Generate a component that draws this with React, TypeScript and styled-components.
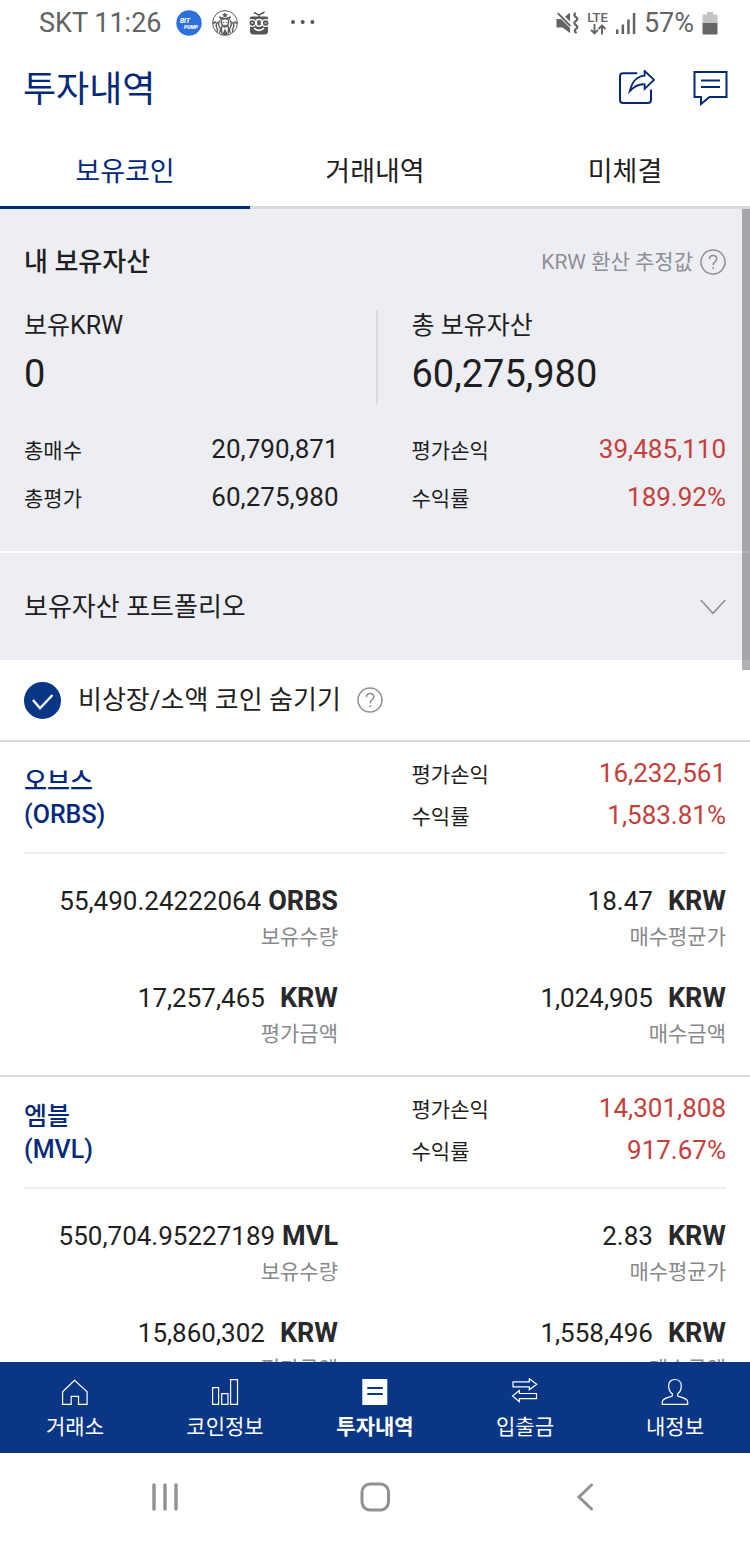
import React, { useState } from "react";
import styled, { createGlobalStyle } from "styled-components";

const navy = "#0a3686";
const deepNavy = "#05297a";
const ink = "#1f1f21";
const red = "#c4403a";
const panel = "#edeef4";

const GlobalStyle = createGlobalStyle`
  *, *::before, *::after { box-sizing: border-box; }
  body {
    margin: 0;
    background: #fff;
    color: ${ink};
    font-family: Roboto, "Noto Sans CJK KR", sans-serif;
  }
  button {
    font: inherit;
    color: inherit;
    background: none;
    border: 0;
    padding: 0;
    cursor: pointer;
  }
  h1, h2, h3, p, dl, dt, dd { margin: 0; font-weight: 400; }
  svg { display: block; flex: none; }
`;

const Screen = styled.div`
  display: flex;
  flex-direction: column;
  height: 100vh;
`;

/* ---------- Status bar ---------- */

const StatusBar = styled.div`
  flex: none;
  display: flex;
  align-items: center;
  justify-content: space-between;
  height: 46px;
  padding: 0 32px 0 39px;
  color: #636363;
  font-size: 27px;
  line-height: 32px;
`;

const StatusGroup = styled.div<{ $gap: number }>`
  display: flex;
  align-items: center;
  gap: ${(p) => p.$gap}px;
`;

const Clock = styled.span`
  margin-right: 4px;
`;

const More = styled.span`
  margin-left: 10px;
`;

const Lte = styled.span`
  display: flex;
  flex-direction: column;
  align-items: center;
  font-size: 13px;
  font-weight: 500;
  line-height: 12px;
`;

/* ---------- Header and tabs ---------- */

const Header = styled.header`
  flex: none;
  display: flex;
  align-items: center;
  justify-content: space-between;
  height: 84px;
  padding: 0 22px 0 23px;
  color: ${deepNavy};
`;

const Title = styled.h1`
  padding-top: 3px;
  font-size: 36px;
  line-height: 48px;
`;

const HeaderActions = styled.div`
  display: flex;
  gap: 38px;
`;

const Tabs = styled.div`
  flex: none;
  display: flex;
`;

const Tab = styled.button<{ $active?: boolean }>`
  flex: 1;
  height: 79px;
  padding-top: 7px;
  border-bottom: 3px solid ${(p) => (p.$active ? deepNavy : "#d9dade")};
  color: ${(p) => (p.$active ? deepNavy : ink)};
  font-size: 27px;
  line-height: 36px;
`;

/* ---------- Scrolling content ---------- */

const Viewport = styled.div`
  position: relative;
  flex: 1;
  min-height: 0;
`;

const Content = styled.main`
  height: 100%;
  overflow-y: auto;
  scrollbar-width: none;
`;

const ScrollThumb = styled.div`
  position: absolute;
  top: 0;
  right: 0;
  width: 8px;
  height: 40%;
  background: rgba(70, 70, 75, 0.42);
`;

const Summary = styled.section`
  padding: 35px 24px 30px;
  background: ${panel};
  border-bottom: 2px solid #fff;
`;

const SummaryHead = styled.div`
  display: flex;
  align-items: center;
  justify-content: space-between;
  margin-bottom: 30px;
`;

const SummaryTitle = styled.h2`
  font-size: 26px;
  font-weight: 500;
  line-height: 36px;
`;

const Hint = styled.button`
  display: flex;
  align-items: center;
  gap: 7px;
  color: #8f9094;
  font-size: 21px;
  line-height: 32px;
`;

const Split = styled.div`
  display: flex;
`;

const Half = styled.div<{ $ruled?: boolean }>`
  flex: 1 1 0;
  min-width: 0;
  &:first-child { padding-right: 37px; }
  &:last-child {
    padding-left: ${(p) => (p.$ruled ? 34 : 36)}px;
    border-left: ${(p) => (p.$ruled ? "2px solid #d9dadf" : "0")};
  }
`;

const Totals = styled(Split)`
  margin-bottom: 21px;
`;

const TotalLabel = styled.p`
  margin-bottom: 8px;
  font-size: 25px;
  line-height: 32px;
`;

const TotalValue = styled.p`
  padding-bottom: 6px;
  font-size: 38px;
  line-height: 48px;
`;

const Stat = styled.div<{ $line: number }>`
  display: flex;
  align-items: baseline;
  justify-content: space-between;
  height: ${(p) => p.$line}px;
  line-height: ${(p) => p.$line}px;
`;

const StatLabel = styled.dt`
  font-size: 21px;
`;

const StatValue = styled.dd<{ $up?: boolean }>`
  font-size: 26px;
  color: ${(p) => (p.$up ? red : ink)};
`;

const Portfolio = styled.button`
  display: flex;
  align-items: center;
  justify-content: space-between;
  width: 100%;
  height: 107px;
  padding: 0 24px;
  background: ${panel};
  font-size: 26px;
  line-height: 36px;
`;

const Filter = styled.div`
  display: flex;
  align-items: center;
  gap: 16px;
  height: 82px;
  padding: 0 24px;
  border-bottom: 2px solid #d9dadc;
  color: #8f9094;
`;

const FilterLabel = styled.label`
  display: flex;
  align-items: center;
  gap: 17px;
  color: ${ink};
  font-size: 26px;
  line-height: 36px;
  cursor: pointer;
`;

const CheckCell = styled.span`
  display: grid;
  width: 37px;
  height: 37px;
  > * { grid-area: 1 / 1; }
`;

const CheckInput = styled.input`
  appearance: none;
  width: 37px;
  height: 37px;
  margin: 0;
  border: 2px solid #b5b6ba;
  border-radius: 50%;
  cursor: pointer;
  &:checked { background: ${navy}; border-color: ${navy}; }
`;

/* ---------- Coin holdings ---------- */

const Coin = styled.article`
  border-bottom: 2px solid #d9dadc;
`;

const CoinHead = styled(Split)`
  height: 112px;
  margin: 0 24px;
  padding-top: 10px;
  border-bottom: 2px solid #ededef;
`;

const CoinName = styled.h3`
  padding-top: 13px;
  color: ${deepNavy};
  font-size: 25px;
  font-weight: 500;
  line-height: 33px;
`;

const CoinBody = styled.dl`
  display: grid;
  grid-template-columns: 1fr 1fr;
  gap: 25px 74px;
  padding: 27px 24px 25px;
  text-align: right;
`;

const Figure = styled.div`
  display: flex;
  flex-direction: column-reverse;
`;

const FigureLabel = styled.dt`
  color: #88898c;
  font-size: 21px;
  line-height: 32px;
`;

const FigureValue = styled.dd`
  height: 40px;
  font-size: 26px;
  line-height: 40px;
  white-space: nowrap;
`;

const Unit = styled.b<{ $wide?: boolean }>`
  margin-left: ${(p) => (p.$wide ? 15 : 7)}px;
  font-size: 27px;
  font-weight: 700;
  color: #29292b;
`;

/* ---------- Bottom bars ---------- */

const BottomNav = styled.nav`
  flex: none;
  display: flex;
  height: 91px;
  background: ${navy};
  color: #fff;
`;

const NavItem = styled.a<{ $active?: boolean }>`
  flex: 1;
  display: flex;
  flex-direction: column;
  align-items: center;
  gap: 5px;
  padding-top: 16px;
  color: inherit;
  text-decoration: none;
  font-size: 21px;
  font-weight: ${(p) => (p.$active ? 700 : 400)};
  line-height: 32px;
`;

const SystemNav = styled.div`
  flex: none;
  display: flex;
  height: 88px;
  padding: 0 60px;
  color: #919191;
`;

const SystemButton = styled.button`
  flex: 1;
  display: flex;
  align-items: center;
  justify-content: center;
`;

/* ---------- Icons ---------- */

const BitPumpIcon = () => (
  <svg width="26" height="26" viewBox="0 0 26 26">
    <circle cx="13" cy="13" r="12.7" fill="#2d6fdb" />
    <g fill="#fff" fontFamily="Roboto, sans-serif" fontWeight="900" fontStyle="italic">
      <text x="4" y="12.5" fontSize="6.5">BIT</text>
      <text x="8" y="18.5" fontSize="5">PUMP</text>
    </g>
  </svg>
);

const SirenIcon = () => (
  <svg width="26" height="26" viewBox="0 0 26 26" fill="none" stroke="#5c5c5c">
    <circle cx="13" cy="13" r="12.4" strokeWidth="1" />
    <path d="M13 2.2l.9 1.9 2 .2-1.5 1.4.4 2.1-1.8-1-1.8 1 .4-2.1-1.5-1.4 2-.2z" fill="#5c5c5c" stroke="none" />
    <path d="M7.5 6.5l1.500 2 2.200-.8M18.500 6.500l-1.500 2-2.200-.8M8.500 10q4.500-2.600 9 0" strokeWidth="1.700" />
    <path d="M9.500 10.500q-.6 5.500 3.500 6.500 4.100-1 3.500-6.500" strokeWidth="1.500" />
    <path d="M11 12.500h1.300M13.800 12.500h1.300M11.800 15.300h2.400" strokeWidth="1" />
    <path d="M8 10.500q-2.500 3-.5 6.500t0 6M5.600 12q-2.500 3-.8 6t-.2 3.500M18 10.500q2.500 3 .5 6.500t0 6M20.400 12q2.500 3 .8 6t.2 3.500M9.800 16q-.8 4 .2 8M16.200 16q.8 4-.2 8" strokeWidth="1.400" />
    <path d="M.7 12.500l3-1.500.6 2-3.300 1zM25.300 12.500l-3-1.500-.6 2 3.300 1zM13 18.500l-3 6.500h6z" fill="#5c5c5c" stroke="none" />
  </svg>
);

const RobotIcon = () => (
  <svg width="22" height="24" viewBox="0 0 22 24">
    <path d="M6 1.500l5 2.600L16.500 1M11 4V6" stroke="#555" strokeWidth="1.500" fill="none" />
    <path d="M3.500 5.500h15q1.500 0 1.500 1.500v13q0 3.500-3.500 3.500h-11Q2 23.500 2 20V7q0-1.500 1.500-1.500z" fill="#555" />
    <g fill="#555" stroke="#fff" strokeWidth="1.300">
      <circle cx="4.300" cy="12" r="3.400" />
      <circle cx="17.700" cy="12" r="3.400" />
      <rect x="8.600" y="8.500" width="4.800" height="6.500" rx="1" />
    </g>
    <path d="M6 17.200q5 4.300 10 0" stroke="#fff" strokeWidth="1.600" fill="none" />
    <path d="M3.200 12h2.200M16.600 12h2.200" stroke="#fff" strokeWidth="1.200" />
  </svg>
);

const MoreDots = () => (
  <svg width="25" height="6" viewBox="0 0 25 6" fill="#555">
    <circle cx="3" cy="2" r="2" />
    <circle cx="12.700" cy="2" r="2" />
    <circle cx="22.400" cy="2" r="2" />
  </svg>
);

const MuteIcon = () => (
  <svg width="23" height="22" viewBox="0 0 23 22" fill="#636363">
    <path d="M.5 7H5l9 9v5L6.500 15.500h-6z" />
    <path d="M9 4.500L14 .7v8.700z" />
    <path d="M1.800 1.200L14.300 14" stroke="#636363" strokeWidth="1.900" />
    <path d="M19.800 1q-3 2 0 4t0 4q-3 2 0 4t0 4q-2.500 2 .8 4" fill="none" stroke="#636363" strokeWidth="2.200" />
  </svg>
);

const DataArrows = () => (
  <svg width="18" height="11" viewBox="0 0 18 11" fill="none" stroke="#636363" strokeWidth="1.900">
    <path d="M5.500 0v9M2 5.800l3.500 3.500L9 5.800M13 10.500V1.500M9.500 5L13 1.600 16.500 5" />
  </svg>
);

const SignalIcon = () => (
  <svg width="20" height="21" viewBox="0 0 20 21" fill="#636363">
    <rect x="0" y="16.500" width="2.500" height="4.500" />
    <rect x="5.600" y="11.500" width="2.500" height="9.500" />
    <rect x="11.200" y="6.500" width="2.500" height="14.500" />
    <rect x="16.800" y="0" width="2.500" height="21" />
  </svg>
);

const BatteryIcon = () => (
  <svg width="16" height="23" viewBox="0 0 16 23">
    <path d="M5 0h6v2.500h3.500q1 0 1 1V11H.5V3.500q0-1 1-1H5z" fill="#c4c4c4" />
    <path d="M.5 11h15v10.500q0 1-1 1h-13q-1 0-1-1z" fill="#666" />
  </svg>
);

const ShareIcon = () => (
  <svg width="36" height="36" viewBox="0 0 36 36" fill="none" stroke="currentColor" strokeWidth="2">
    <path d="M18.200 3.300H4q-3 0-3 3V30q0 3 3 3h25q3 0 3-3V19.500" />
    <path d="M25.600 1l9.400 8.900-9.400 9.100v-4.700q-8-.8-14.800 6.900Q14 6.700 25.600 5.600z" strokeWidth="1.800" />
  </svg>
);

const ChatIcon = () => (
  <svg width="35" height="36" viewBox="0 0 35 36" fill="none" stroke="currentColor" strokeWidth="2">
    <path d="M1.500 2H33.500v25H16.500L8 34V27H1.500z" />
    <path d="M8 10.500h19M8 17h19" />
  </svg>
);

const HelpIcon = () => (
  <svg width="26" height="26" viewBox="0 0 26 26" fill="none" stroke="currentColor" strokeWidth="1.500">
    <circle cx="13" cy="13" r="12" />
    <path d="M9.400 10.300q0-3.800 3.700-3.800 3.600 0 3.600 3.300 0 1.700-1.800 3.100-1.800 1.300-1.800 3.300" />
    <path d="M13.100 18v1.900" />
  </svg>
);

const ChevronDown = () => (
  <svg width="26" height="16" viewBox="0 0 26 16" fill="none" stroke="#8d8e92" strokeWidth="1.500">
    <path d="M.7 1L13 14.300 25.300 1" />
  </svg>
);

const CheckMark = () => (
  <svg width="37" height="37" viewBox="0 0 37 37" fill="none" stroke="#fff" strokeWidth="2.400" pointerEvents="none">
    <path d="M9 18l7 8.300L28.500 13" />
  </svg>
);

const navIcon = { width: 28, height: 28, viewBox: "0 0 28 28", fill: "none", stroke: "#fff", strokeWidth: 1.2 };

const HomeIcon = () => (
  <svg {...navIcon}>
    <path d="M13.600 2.200L1.600 13.700v12.700h8.600v-8h7.300v8h8.600V13.700z" />
  </svg>
);

const BarsIcon = () => (
  <svg {...navIcon}>
    <path d="M1.600 9.600h6v16.800h-6zM10.700 15.600h6.300v10.800h-6.300zM19.600 1.700h6.900v24.700h-6.900z" />
  </svg>
);

const ListIcon = () => (
  <svg {...navIcon}>
    <path d="M1.300 1h25v26h-25z" fill="#fff" stroke="none" />
    <path d="M6.300 10h15.500M6.300 16h15.500" stroke={navy} strokeWidth="2" />
  </svg>
);

const TransferIcon = () => (
  <svg {...navIcon}>
    <path d="M2 3.800h16.300V.8l7.400 5.500-7.400 5.500V8.800H2zM25.500 15.500H8.300v-3L1.500 18l6.800 5.700v-3h17.200z" />
  </svg>
);

const PersonIcon = () => (
  <svg {...navIcon}>
    <path d="M13.700 1.500c-4 0-6 2.600-6 6.200 0 3.500 1.300 6.500 3.600 8v2.200c-2 1.500-10 1.600-10 6v2.500h25.400v-2.500c0-4.400-8-4.500-10-6v-2.200c2.300-1.500 3.600-4.500 3.600-8 0-3.600-2.600-6.200-6.600-6.200z" />
  </svg>
);

const RecentsIcon = () => (
  <svg width="28" height="28" viewBox="0 0 28 28" stroke="currentColor" strokeWidth="3.400" strokeLinecap="round">
    <path d="M3 2v24M14 2v24M25 2v24" />
  </svg>
);

const HomeKeyIcon = () => (
  <svg width="30" height="30" viewBox="0 0 30 30" fill="none" stroke="currentColor" strokeWidth="3">
    <rect x="2" y="2" width="26.500" height="26" rx="8" />
  </svg>
);

const BackIcon = () => (
  <svg width="18" height="28" viewBox="0 0 18 28" fill="none" stroke="currentColor" strokeWidth="3" strokeLinecap="round">
    <path d="M15.500 2L3 14l12.500 12" />
  </svg>
);

/* ---------- Data ---------- */

const tabs = ["보유코인", "거래내역", "미체결"];

const coins = [
  {
    name: "오브스",
    symbol: "ORBS",
    profit: "16,232,561",
    rate: "1,583.81%",
    quantity: "55,490.24222064",
    average: "18.47",
    value: "17,257,465",
    cost: "1,024,905",
  },
  {
    name: "엠블",
    symbol: "MVL",
    profit: "14,301,808",
    rate: "917.67%",
    quantity: "550,704.95227189",
    average: "2.83",
    value: "15,860,302",
    cost: "1,558,496",
  },
];

const navItems = [
  { label: "거래소", icon: <HomeIcon /> },
  { label: "코인정보", icon: <BarsIcon /> },
  { label: "투자내역", icon: <ListIcon />, active: true },
  { label: "입출금", icon: <TransferIcon /> },
  { label: "내정보", icon: <PersonIcon /> },
];

type RowProps = { label: string; value: string; up?: boolean; line?: number };

const StatRow = ({ label, value, up, line = 48 }: RowProps) => (
  <Stat $line={line}>
    <StatLabel>{label}</StatLabel>
    <StatValue $up={up}>{value}</StatValue>
  </Stat>
);

type AmountProps = { label: string; value: string; unit?: string };

const Amount = ({ label, value, unit }: AmountProps) => (
  <Figure>
    <FigureLabel>{label}</FigureLabel>
    <FigureValue>
      {value}
      <Unit $wide={!unit}>{unit ?? "KRW"}</Unit>
    </FigureValue>
  </Figure>
);

export default function App() {
  const [tab, setTab] = useState(0);
  const [hideSmall, setHideSmall] = useState(true);

  return (
    <Screen>
      <GlobalStyle />
      <StatusBar>
        <StatusGroup $gap={10}>
          <Clock>SKT 11:26</Clock>
          <BitPumpIcon />
          <SirenIcon />
          <RobotIcon />
          <More><MoreDots /></More>
        </StatusGroup>
        <StatusGroup $gap={8}>
          <MuteIcon />
          <Lte>
            LTE
            <DataArrows />
          </Lte>
          <SignalIcon />
          <span>57%</span>
          <BatteryIcon />
        </StatusGroup>
      </StatusBar>

      <Header>
        <Title>투자내역</Title>
        <HeaderActions>
          <button type="button" aria-label="공유"><ShareIcon /></button>
          <button type="button" aria-label="문의"><ChatIcon /></button>
        </HeaderActions>
      </Header>

      <Tabs role="tablist">
        {tabs.map((name, i) => (
          <Tab key={name} type="button" role="tab" aria-selected={i === tab} $active={i === tab} onClick={() => setTab(i)}>
            {name}
          </Tab>
        ))}
      </Tabs>

      <Viewport>
        <Content>
          <Summary>
            <SummaryHead>
              <SummaryTitle>내 보유자산</SummaryTitle>
              <Hint type="button">
                KRW 환산 추정값
                <HelpIcon />
              </Hint>
            </SummaryHead>
            <Totals>
              <Half>
                <TotalLabel>보유KRW</TotalLabel>
                <TotalValue>0</TotalValue>
              </Half>
              <Half $ruled>
                <TotalLabel>총 보유자산</TotalLabel>
                <TotalValue>60,275,980</TotalValue>
              </Half>
            </Totals>
            <Split>
              <Half as="dl">
                <StatRow label="총매수" value="20,790,871" />
                <StatRow label="총평가" value="60,275,980" />
              </Half>
              <Half as="dl">
                <StatRow label="평가손익" value="39,485,110" up />
                <StatRow label="수익률" value="189.92%" up />
              </Half>
            </Split>
          </Summary>

          <Portfolio type="button">
            보유자산 포트폴리오
            <ChevronDown />
          </Portfolio>

          <Filter>
            <FilterLabel>
              <CheckCell>
                <CheckInput type="checkbox" checked={hideSmall} onChange={(e) => setHideSmall(e.target.checked)} />
                {hideSmall && <CheckMark />}
              </CheckCell>
              비상장/소액 코인 숨기기
            </FilterLabel>
            <button type="button" aria-label="도움말"><HelpIcon /></button>
          </Filter>

          {coins.map((c) => (
            <Coin key={c.symbol}>
              <CoinHead>
                <Half>
                  <CoinName>
                    {c.name}
                    <br />({c.symbol})
                  </CoinName>
                </Half>
                <Half as="dl">
                  <StatRow label="평가손익" value={c.profit} up line={42} />
                  <StatRow label="수익률" value={c.rate} up line={42} />
                </Half>
              </CoinHead>
              <CoinBody>
                <Amount label="보유수량" value={c.quantity} unit={c.symbol} />
                <Amount label="매수평균가" value={c.average} />
                <Amount label="평가금액" value={c.value} />
                <Amount label="매수금액" value={c.cost} />
              </CoinBody>
            </Coin>
          ))}
        </Content>
        <ScrollThumb />
      </Viewport>

      <BottomNav>
        {navItems.map((n) => (
          <NavItem key={n.label} href="#" $active={n.active}>
            {n.icon}
            {n.label}
          </NavItem>
        ))}
      </BottomNav>

      <SystemNav>
        <SystemButton type="button" aria-label="최근 앱"><RecentsIcon /></SystemButton>
        <SystemButton type="button" aria-label="홈"><HomeKeyIcon /></SystemButton>
        <SystemButton type="button" aria-label="뒤로"><BackIcon /></SystemButton>
      </SystemNav>
    </Screen>
  );
}
